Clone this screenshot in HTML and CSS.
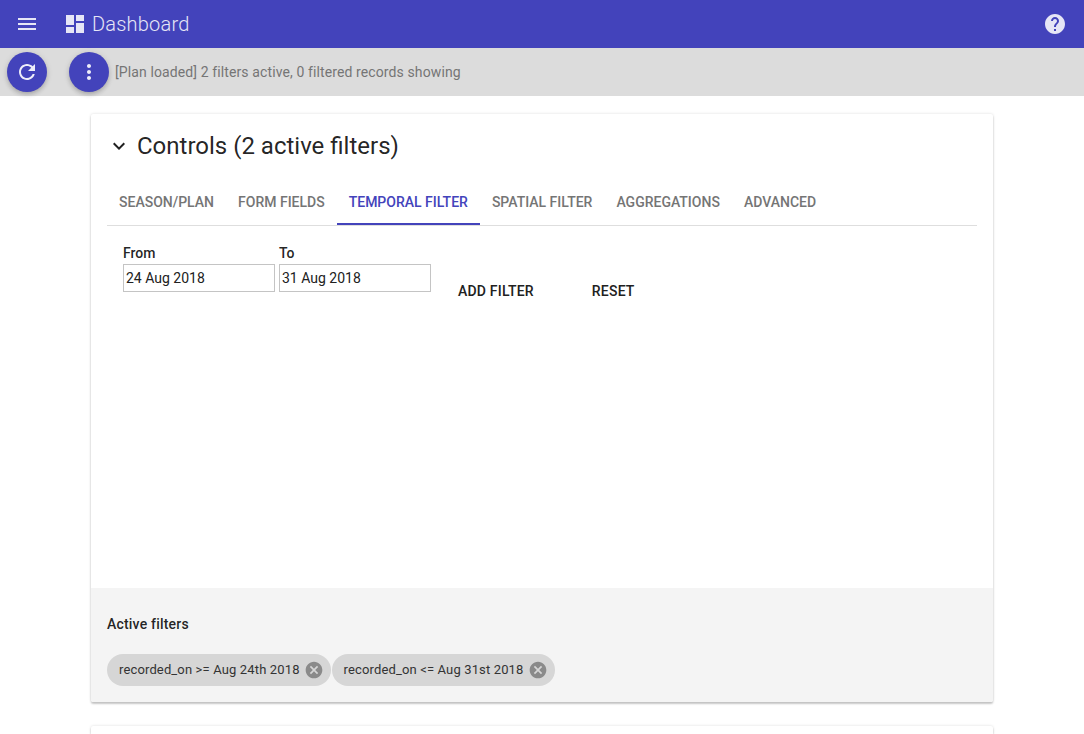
FILE: index.html
```html
<!DOCTYPE html>
<html lang="en">
<head>
    <meta charset="UTF-8">
    <meta name="viewport" content="width=device-width, initial-scale=1.0">
    <title>Dashboard</title>
    <link rel="stylesheet" href="styles.css">
</head>
<body>
    <header class="topbar">
        <svg class="menu-icon" viewBox="0 0 24 24" width="24" height="24"><path d="M3 18h18v-2H3v2zm0-5h18v-2H3v2zm0-7v2h18V6H3z"/></svg>
        <svg class="dash-icon" viewBox="0 0 24 24" width="24" height="24"><path d="M3 13h8V3H3v10zm0 8h8v-6H3v6zm10 0h8V11h-8v10zm0-18v6h8V3h-8z"/></svg>
        <span class="topbar-title">Dashboard</span>
        <svg class="help-icon" viewBox="0 0 24 24" width="24" height="24"><path d="M12 2C6.48 2 2 6.48 2 12s4.48 10 10 10 10-4.48 10-10S17.52 2 12 2zm1 17h-2v-2h2v2zm2.07-7.75l-.9.92C13.45 12.9 13 13.5 13 15h-2v-.5c0-1.1.45-2.1 1.17-2.83l1.24-1.26c.37-.36.59-.86.59-1.41 0-1.1-.9-2-2-2s-2 .9-2 2H8c0-2.21 1.79-4 4-4s4 1.79 4 4c0 .88-.36 1.68-.93 2.25z"/></svg>
    </header>

    <div class="statusbar">
        <button class="fab fab-refresh" type="button">
            <svg viewBox="0 0 24 24" width="24" height="24"><path d="M17.65 6.35C16.2 4.9 14.21 4 12 4c-4.42 0-7.99 3.58-7.99 8s3.57 8 7.99 8c3.73 0 6.84-2.55 7.73-6h-2.08c-.82 2.33-3.04 4-5.65 4-3.31 0-6-2.69-6-6s2.69-6 6-6c1.66 0 3.14.69 4.22 1.78L13 11h7V4l-2.35 2.35z"/></svg>
        </button>
        <button class="fab fab-more" type="button">
            <svg viewBox="0 0 24 24" width="24" height="24"><path d="M12 8c1.1 0 2-.9 2-2s-.9-2-2-2-2 .9-2 2 .9 2 2 2zm0 2c-1.1 0-2 .9-2 2s.9 2 2 2 2-.9 2-2-.9-2-2-2zm0 6c-1.1 0-2 .9-2 2s.9 2 2 2 2-.9 2-2-.9-2-2-2z"/></svg>
        </button>
        <span class="status-text">[Plan loaded] 2 filters active, 0 filtered records showing</span>
    </div>

    <main class="content">
        <section class="card">
            <div class="card-body">
                <div class="card-title">
                    <svg class="chevron" viewBox="0 0 24 24" width="24" height="24"><path d="M16.59 8.59L12 13.17 7.41 8.59 6 10l6 6 6-6z"/></svg>
                    <h2>Controls (2 active filters)</h2>
                </div>

                <nav class="tabs">
                    <a class="tab">Season/Plan</a>
                    <a class="tab">Form Fields</a>
                    <a class="tab tab-active">Temporal Filter</a>
                    <a class="tab">Spatial Filter</a>
                    <a class="tab">Aggregations</a>
                    <a class="tab">Advanced</a>
                </nav>

                <form class="date-form">
                    <div class="field">
                        <label for="dateFrom">From</label>
                        <input type="text" id="dateFrom" value="24 Aug 2018">
                    </div>
                    <div class="field">
                        <label for="dateTo">To</label>
                        <input type="text" id="dateTo" value="31 Aug 2018">
                    </div>
                    <button class="text-btn btn-add" type="button">Add Filter</button>
                    <button class="text-btn btn-reset" type="button">Reset</button>
                </form>
            </div>

            <div class="active-filters">
                <h3>Active filters</h3>
                <div class="chips">
                    <span class="chip">recorded_on &gt;= Aug 24th 2018
                        <svg viewBox="0 0 24 24" width="20" height="20"><path d="M12 2C6.47 2 2 6.47 2 12s4.47 10 10 10 10-4.47 10-10S17.53 2 12 2zm5 13.59L15.59 17 12 13.41 8.41 17 7 15.59 10.59 12 7 8.41 8.41 7 12 10.59 15.59 7 17 8.41 13.41 12 17 15.59z"/></svg>
                    </span>
                    <span class="chip">recorded_on &lt;= Aug 31st 2018
                        <svg viewBox="0 0 24 24" width="20" height="20"><path d="M12 2C6.47 2 2 6.47 2 12s4.47 10 10 10 10-4.47 10-10S17.53 2 12 2zm5 13.59L15.59 17 12 13.41 8.41 17 7 15.59 10.59 12 7 8.41 8.41 7 12 10.59 15.59 7 17 8.41 13.41 12 17 15.59z"/></svg>
                    </span>
                </div>
            </div>
        </section>

        <section class="card card-next"></section>
    </main>
</body>
</html>
```

FILE: styles.css
```css
/* Global Styles */
html, body {
    height: 100%;
    overflow: hidden;
}

body {
    margin: 0;
    font-family: Roboto, 'Liberation Sans', sans-serif;
    background-color: #ffffff;
    color: rgba(0, 0, 0, 0.87);
}

/* Top bar */
.topbar {
    height: 48px;
    background-color: #4343bb;
    display: flex;
    align-items: center;
    padding: 0 17px 0 15px;
    color: #e6e6f6;
}

.topbar svg {
    fill: currentColor;
    flex: none;
}

.dash-icon {
    margin-left: 24px;
}

.topbar-title {
    margin-left: 5px;
    font-size: 20px;
    font-weight: 300;
    letter-spacing: 0.2px;
}

.help-icon {
    margin-left: auto;
    fill: #eeeef9;
}

/* Status bar */
.statusbar {
    height: 48px;
    background-color: #dcdcdc;
    display: flex;
    align-items: center;
    padding-left: 7px;
}

.fab {
    width: 40px;
    height: 40px;
    padding: 0;
    border: none;
    border-radius: 50%;
    background-color: #4343bb;
    color: #eeeef9;
    display: flex;
    align-items: center;
    justify-content: center;
    flex: none;
    box-shadow: 0 3px 5px -1px rgba(0, 0, 0, 0.2), 0 1px 6px rgba(0, 0, 0, 0.12);
}

.fab svg {
    fill: currentColor;
}

.fab-more {
    margin-left: 22px;
}

.status-text {
    margin-left: 6px;
    font-size: 14px;
    letter-spacing: 0.11px;
    color: #757575;
}

/* Cards */
.content {
    padding: 18px 91px 0;
}

.card {
    background: #ffffff;
    border-radius: 2px;
    height: 588px;
    display: flex;
    flex-direction: column;
    overflow: hidden;
    box-shadow: 0 2px 2px rgba(0, 0, 0, 0.2), 0 0 3px rgba(0, 0, 0, 0.14);
}

.card-next {
    margin-top: 24px;
    height: 8px;
    border-radius: 2px 2px 0 0;
}

.card-body {
    flex: 1;
    padding: 0 16px;
}

.card-title {
    display: flex;
    align-items: center;
    height: 64px;
}

.chevron {
    fill: #212121;
    width: 24px;
    flex: none;
}

.card-title h2 {
    margin: 0 0 0 6px;
    font-size: 24px;
    font-weight: 400;
    letter-spacing: 0;
}

/* Tabs */
.tabs {
    display: flex;
    height: 47px;
    border-bottom: 1px solid #dedede;
}

.tab {
    padding: 0 12px;
    height: 47px;
    line-height: 48px;
    box-sizing: border-box;
    font-size: 14px;
    font-weight: 500;
    text-transform: uppercase;
    color: #757575;
}

.tab-active {
    color: #4343bb;
    border-bottom: 2px solid #4343bb;
}

/* Date form */
.date-form {
    display: flex;
    padding: 19px 0 0 16px;
    gap: 4px;
}

.field {
    display: flex;
    flex-direction: column;
}

.field label {
    font-size: 14px;
    font-weight: 500;
    line-height: 16px;
    height: 19px;
}

.field input {
    width: 152px;
    height: 28px;
    box-sizing: border-box;
    padding: 0 2px;
    border: 1px solid #c4c4c4;
    font-family: inherit;
    font-size: 14px;
    color: #212121;
    background: #ffffff;
}

.text-btn {
    border: none;
    background: none;
    padding: 0;
    height: 36px;
    font-family: inherit;
    font-size: 14px;
    font-weight: 500;
    letter-spacing: 0.2px;
    text-transform: uppercase;
    color: #212121;
    margin-top: 28px;
}

.btn-add {
    margin-left: 23px;
}

.btn-reset {
    margin-left: 54px;
}

/* Active filters */
.active-filters {
    height: 114px;
    box-sizing: border-box;
    background-color: #f4f4f4;
    padding: 27px 16px 0;
}

.active-filters h3 {
    margin: 0;
    font-size: 14px;
    font-weight: 500;
    letter-spacing: 0.2px;
    line-height: 18px;
}

.chips {
    display: flex;
    margin-top: 21px;
}

.chip {
    height: 32px;
    box-sizing: border-box;
    padding: 0 7px 2px 12px;
    margin-right: 1px;
    border-radius: 16px;
    background-color: #d6d6d6;
    display: flex;
    align-items: center;
    gap: 4px;
    font-size: 13px;
    letter-spacing: 0.14px;
    white-space: nowrap;
    color: #333333;
}

.chip svg {
    fill: #8a8a8a;
    flex: none;
    margin-bottom: -2px;
}
```
